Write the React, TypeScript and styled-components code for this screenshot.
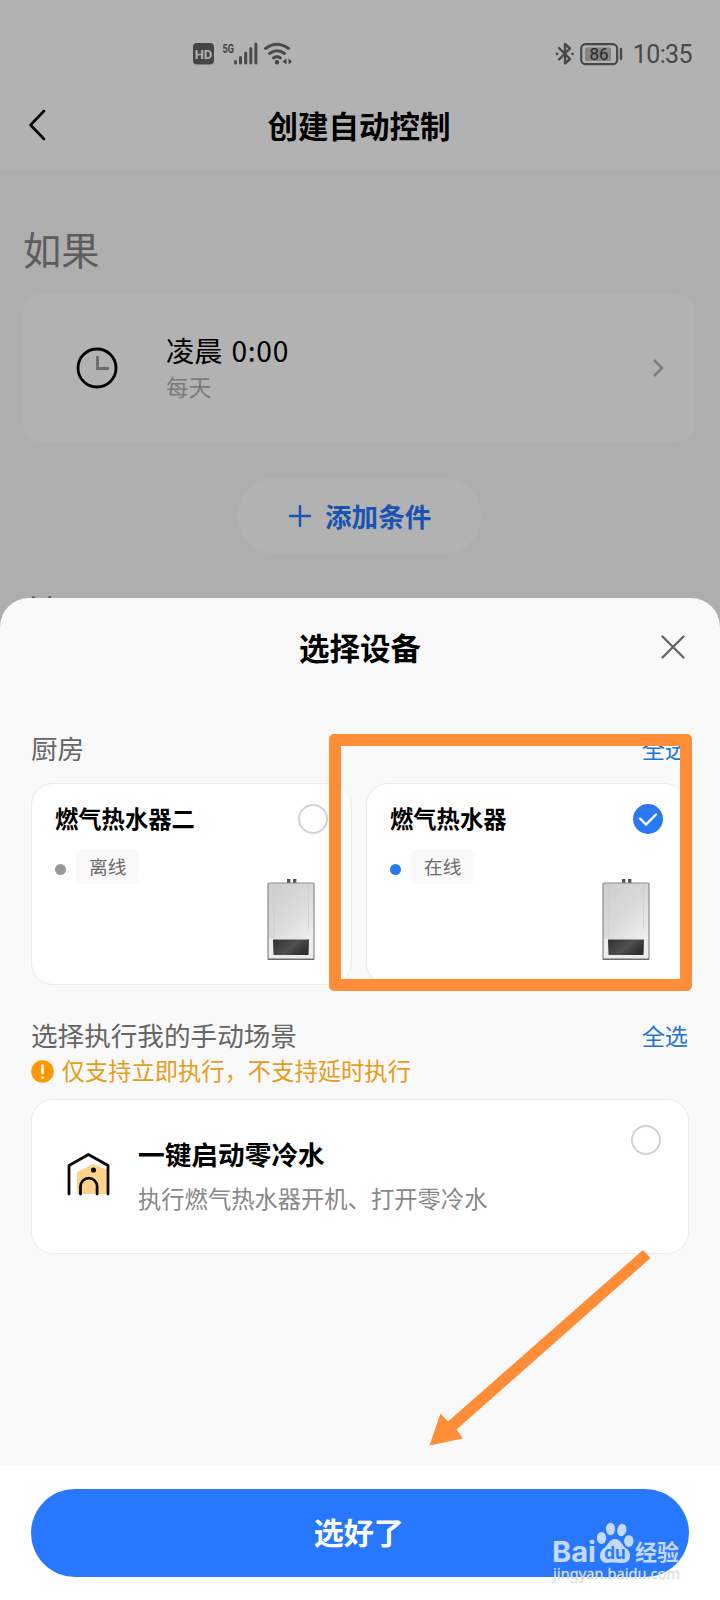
import React from "react";
import styled, { createGlobalStyle } from "styled-components";

const GlobalStyle = createGlobalStyle`
  * { box-sizing: border-box; }
  body { margin: 0; background: #f9f9f9; }
`;

const cjk = `"Noto Sans CJK SC", "Noto Sans", sans-serif`;
const orange = "#ff8d37";
const blue = "#2878ff";

const Screen = styled.div`
  position: relative;
  width: 720px;
  height: 1600px;
  overflow: hidden;
  font-family: ${cjk};
  color: #000;
  white-space: nowrap;
`;

/* page behind the sheet */
const Page = styled.div`
  display: flex;
  flex-direction: column;
  height: 100%;
  background: #fafafa;
`;

const StatusBar = styled.div`
  display: flex;
  align-items: center;
  justify-content: space-between;
  height: 80px;
  padding: 27px 28px 0 193px;
  background: #fff;
  & > div { display: flex; align-items: center; height: 53px; }
`;

const Clock = styled.span`
  margin: 2px 0 0 10px;
  font: 400 25px/28px Roboto, sans-serif;
  letter-spacing: -0.6px;
  color: #686868;
`;

const NavBar = styled.div`
  display: grid;
  grid-template-columns: 80px 1fr 80px;
  align-items: center;
  height: 90px;
  background: #fff;
  padding-bottom: 1px;
  & > svg { margin-left: 28px; }
  & > h1 { margin-left: -2px; }
`;

const Title = styled.h1`
  margin: 0;
  font-size: 30.5px;
  line-height: 44px;
  font-weight: 700;
  text-align: center;
`;

const GroupTitle = styled.h2<{ $top: number }>`
  margin: ${(p) => p.$top}px 0 0 23px;
  font-size: 38.2px;
  line-height: 50px;
  font-weight: 400;
  color: #858585;
`;

const ConditionCard = styled.div`
  display: flex;
  align-items: center;
  height: 150px;
  margin: 19px 25px 0 23px;
  padding: 0 30px 0 53px;
  border-radius: 22px;
  background: #fff;
`;

const ConditionText = styled.div`
  flex: 1;
  margin-left: 48px;
`;

const ConditionName = styled.div`
  font-size: 28.2px;
  line-height: 36px;
`;

const Digits = styled.span`
  margin-left: 2px;
  letter-spacing: 0.7px;
`;

const ConditionNote = styled.div`
  padding-top: 1px;
  font-size: 22.8px;
  line-height: 36px;
  color: #b0b0b0;
`;

const AddButton = styled.div`
  display: flex;
  align-items: center;
  align-self: center;
  gap: 14px;
  width: 244px;
  height: 76px;
  margin: 35px 2px 0 0;
  padding: 0 0 0 52px;
  border-radius: 38px;
  background: #fff;
  color: ${blue};
  font-size: 26.6px;
  line-height: 38px;
  font-weight: 700;
  & > span { margin-top: -1px; }
`;

const Scrim = styled.div`
  position: absolute;
  inset: 0;
  background: rgba(0, 0, 0, 0.3);
`;

/* bottom sheet */
const Sheet = styled.div`
  position: absolute;
  left: 0;
  right: 0;
  bottom: 0;
  height: 1002px;
  display: flex;
  flex-direction: column;
  border-radius: 29px 29px 0 0;
  background: #f9f9f9;
  overflow: hidden;
`;

const SheetHeader = styled.div`
  display: grid;
  grid-template-columns: 80px 1fr 80px;
  align-items: center;
  height: 97px;
  & > svg { margin-left: 20px; }
`;

const SheetBody = styled.div`
  display: flex;
  flex-direction: column;
  padding: 32px 31px 0 31px;
`;

const SectionHead = styled.div<{ $h: number }>`
  display: flex;
  align-items: center;
  justify-content: space-between;
  height: ${(p) => p.$h}px;
`;

const SectionName = styled.span`
  font-size: 26.6px;
  line-height: 36px;
  color: #666;
`;

const SelectAll = styled.span`
  margin-right: 1px;
  font-size: 23.2px;
  line-height: 34px;
  color: #2474d4;
`;

const DeviceRow = styled.div`
  display: grid;
  grid-template-columns: 321px 321px;
  gap: 14px;
  margin: 15px 0 32px;
`;

const Card = styled.div`
  border: 1px solid #ebebeb;
  border-radius: 22px;
  background: #fff;
`;

const DeviceCard = styled(Card)`
  display: flex;
  flex-direction: column;
  height: 202px;
  padding: 19px 23px 0;
`;

const DeviceHead = styled.div`
  display: flex;
  align-items: center;
  justify-content: space-between;
  height: 32px;
  font-size: 23.3px;
  line-height: 30px;
  font-weight: 700;
  & > span:first-child { margin-top: -2px; }
`;

const Radio = styled.span<{ $on?: boolean }>`
  display: flex;
  flex: none;
  align-items: center;
  justify-content: center;
  width: 30px;
  height: 30px;
  border-radius: 50%;
  border: ${(p) => (p.$on ? "none" : "2px solid #d2d2d2")};
  background: ${(p) => (p.$on ? "#2a78f6" : "#fff")};
`;

const DeviceStatus = styled.div`
  display: flex;
  align-items: center;
  gap: 10px;
  height: 36px;
  margin-top: 13px;
`;

const Dot = styled.i<{ $on?: boolean }>`
  width: 11px;
  height: 11px;
  margin-top: 6px;
  border-radius: 50%;
  background: ${(p) => (p.$on ? "#2a78f0" : "#999")};
`;

const Tag = styled.span`
  padding: 0 13px 1px;
  border-radius: 6px;
  background: #f9f9f9;
  font-size: 18.7px;
  line-height: 34px;
  color: #6c6c6c;
`;

const HeaterSlot = styled.div`
  display: flex;
  justify-content: flex-end;
  margin: -5px 13px 0 0;
`;

const Warning = styled.div`
  display: flex;
  align-items: center;
  gap: 8px;
  height: 34px;
  margin: 1px 0 11px -0.5px;
  font-size: 23.3px;
  line-height: 34px;
  color: #e79c1c;
  & > span { margin-top: -2px; }
`;

const SceneCard = styled(Card)`
  display: flex;
  height: 155px;
  padding: 25px 27px 0 34px;
`;

const SceneText = styled.div`
  flex: 1;
  margin: 9px 0 0 28px;
`;

const SceneName = styled.div`
  font-size: 26.7px;
  line-height: 40px;
  font-weight: 700;
`;

const SceneNote = styled.div`
  margin-top: 4px;
  font-size: 23.3px;
  line-height: 40px;
  color: #888;
`;

const IconSlot = styled.div`
  margin-top: 27px;
`;

const Footer = styled.div`
  height: 135px;
  margin-top: auto;
  padding: 23.5px 31px 0 30.5px;
  background: #fff;
`;

const Confirm = styled.div`
  height: 88px;
  padding: 0 2px 3px 0;
  display: flex;
  align-items: center;
  justify-content: center;
  border-radius: 44px;
  background: ${blue};
  color: #fff;
  font-size: 30px;
  font-weight: 700;
`;

/* annotations drawn over the sheet */
const Highlight = styled.div`
  position: absolute;
  left: 329px;
  top: 734px;
  width: 363px;
  height: 257px;
  border: 12px solid ${orange};
  border-radius: 5px;
`;

const Arrow = styled.svg`
  position: absolute;
  left: 425px;
  top: 1245px;
`;

const Watermark = styled.svg`
  position: absolute;
  left: 545px;
  top: 1515px;
`;

const Heater = () => (
  <svg width="48" height="82" viewBox="0 0 48 82">
    <defs>
      <linearGradient id="steel" x1="0" y1="0" x2="0.6" y2="1">
        <stop offset="0" stopColor="#cdcdcd" />
        <stop offset="0.5" stopColor="#d9d9d9" />
        <stop offset="1" stopColor="#f2f2f2" />
      </linearGradient>
      <linearGradient id="glass" x1="0" y1="0" x2="1" y2="0.5">
        <stop offset="0" stopColor="#2e2e2e" />
        <stop offset="0.6" stopColor="#505050" />
        <stop offset="1" stopColor="#303030" />
      </linearGradient>
    </defs>
    <rect x="20" y="0" width="3.4" height="5" fill="#555" />
    <rect x="26" y="0" width="3.4" height="5" fill="#555" />
    <rect x="1" y="4" width="46" height="76.5" rx="1" fill="url(#steel)" stroke="#8c8c8c" strokeWidth="1.2" />
    <path d="M7 6V60M41.5 6V50" stroke="#cacaca" strokeWidth="0.7" />
    <path d="M2 60H46V79H2Z" fill="#ededed" />
    <path d="M1 80.3H47" stroke="#6c6c6c" strokeWidth="1.5" />
    <path d="M6 60.5H42L41.5 76H6.5Z" fill="url(#glass)" />
  </svg>
);

const devices = [
  { name: "燃气热水器二", status: "离线", on: false },
  { name: "燃气热水器", status: "在线", on: true },
];

export default function App() {
  return (
    <Screen>
      <GlobalStyle />
      <Page>
        <StatusBar>
          <div>
            <svg width="102" height="26" viewBox="0 0 102 26" fill="none">
              <rect x="0" y="2" width="21" height="21.5" rx="4" fill="#636363" />
              <text x="10.5" y="18" fontFamily="Roboto, sans-serif" fontSize="13" fontWeight="700" fill="#fff" textAnchor="middle">HD</text>
              <text x="29.5" y="11.5" fontFamily="Roboto, sans-serif" fontSize="12.5" fontWeight="700" fill="#636363" textLength="11.5" lengthAdjust="spacingAndGlyphs">5G</text>
              <path d="M42.5 22V20.5M47.5 22V16.5M52.7 22V12M57.8 22V7.5M62.9 22V3" stroke="#6a6a6a" strokeWidth="3" strokeLinecap="round" />
              <path d="M72.5 7.5Q84 -1 95.5 7.5M76.5 12.5Q84 7 91.5 12.5M80.5 17Q84 14.6 87.5 17" stroke="#6a6a6a" strokeWidth="2.9" strokeLinecap="round" />
              <circle cx="84" cy="21.3" r="2.2" fill="#636363" />
              <path d="M93.5 17.5V23.5L89.5 20.5ZM95.5 17.5V23.5L99 20.5Z" fill="#636363" />
            </svg>
          </div>
          <div>
            <svg width="68" height="26" viewBox="0 0 68 26" fill="none">
              <path d="M4 7L15 18L10 22.5V3L15 7.5L4 18.5" stroke="#686868" strokeWidth="2.4" strokeLinejoin="round" strokeLinecap="round" />
              <circle cx="2" cy="12.8" r="1.4" fill="#686868" />
              <circle cx="17.5" cy="12.8" r="1.4" fill="#686868" />
              <rect x="26.2" y="3.2" width="36" height="20" rx="4.5" stroke="#686868" strokeWidth="2.2" />
              <rect x="30" y="6.5" width="26" height="13.5" rx="2" fill="#bdbdbd" />
              <text x="44" y="19" fontFamily="Roboto, sans-serif" fontSize="17" fill="#3c3c3c" textAnchor="middle">86</text>
              <path d="M66 8V18" stroke="#686868" strokeWidth="2.4" strokeLinecap="round" />
            </svg>
            <Clock>10:35</Clock>
          </div>
        </StatusBar>
        <NavBar>
          <svg width="18" height="32" viewBox="0 0 18 32" fill="none">
            <path d="M16 2L2.5 16L16 30" stroke="#000" strokeWidth="2.6" strokeLinecap="round" strokeLinejoin="round" />
          </svg>
          <Title>创建自动控制</Title>
        </NavBar>
        <GroupTitle $top={54}>如果</GroupTitle>
        <ConditionCard>
          <svg width="42" height="42" viewBox="0 0 42 42" fill="none">
            <circle cx="21" cy="21" r="19" stroke="#000" strokeWidth="2.8" />
            <path d="M21.5 9V21.5H33" stroke="#999" strokeWidth="2.8" />
          </svg>
          <ConditionText>
            <ConditionName>凌晨<Digits> 0:00</Digits></ConditionName>
            <ConditionNote>每天</ConditionNote>
          </ConditionText>
          <svg width="13" height="20" viewBox="0 0 13 20" fill="none">
            <path d="M2 2L10 10L2 18" stroke="#b4b4b4" strokeWidth="2.5" />
          </svg>
        </ConditionCard>
        <AddButton>
          <svg width="22" height="22" viewBox="0 0 22 22">
            <path d="M11 1V21M1 11H21" stroke={blue} strokeWidth="2.5" strokeLinecap="round" />
          </svg>
          <span>添加条件</span>
        </AddButton>
        <GroupTitle $top={34}>就</GroupTitle>
      </Page>
      <Scrim />
      <Sheet>
        <SheetHeader>
          <span />
          <Title as="h2">选择设备</Title>
          <svg width="26" height="26" viewBox="0 0 26 26">
            <path d="M2.5 2.5L23.5 23.5M23.5 2.5L2.5 23.5" stroke="#666" strokeWidth="2.4" strokeLinecap="round" />
          </svg>
        </SheetHeader>
        <SheetBody>
          <SectionHead $h={41}>
            <SectionName>厨房</SectionName>
            <SelectAll>全选</SelectAll>
          </SectionHead>
          <DeviceRow>
            {devices.map((d) => (
              <DeviceCard key={d.name}>
                <DeviceHead>
                  <span>{d.name}</span>
                  <Radio $on={d.on}>
                    {d.on && (
                      <svg width="20" height="16" viewBox="0 0 20 16" fill="none">
                        <path d="M2 7.5L8 13.5L18 3.5" stroke="#fff" strokeWidth="2.3" strokeLinecap="round" />
                      </svg>
                    )}
                  </Radio>
                </DeviceHead>
                <DeviceStatus>
                  <Dot $on={d.on} />
                  <Tag>{d.status}</Tag>
                </DeviceStatus>
                <HeaterSlot>
                  <Heater />
                </HeaterSlot>
              </DeviceCard>
            ))}
          </DeviceRow>
          <SectionHead $h={36}>
            <SectionName>选择执行我的手动场景</SectionName>
            <SelectAll>全选</SelectAll>
          </SectionHead>
          <Warning>
            <svg width="23" height="23" viewBox="0 0 23 23">
              <circle cx="11.5" cy="11.5" r="11.3" fill="#ff9800" />
              <path d="M11.5 5.5V13" stroke="#fff" strokeWidth="2.6" strokeLinecap="round" />
              <circle cx="11.5" cy="17.5" r="1.6" fill="#fff" />
            </svg>
            <span>仅支持立即执行，不支持延时执行</span>
          </Warning>
          <SceneCard>
            <IconSlot>
              <svg width="44" height="44" viewBox="0 0 44 44" fill="none">
                <path d="M11 20L27 12L42 18V42H11Z" fill="#ffd28c" />
                <path d="M3 42V13.5L22.5 2.5L42 13.5V42" stroke="#0a0a0a" strokeWidth="2.8" strokeLinejoin="round" strokeLinecap="round" />
                <path d="M14.5 42V34.5A8.3 8.3 0 0 1 31.1 34.5V42" stroke="#0a0a0a" strokeWidth="2.8" strokeLinecap="round" />
                <circle cx="27.5" cy="18" r="2.6" fill="#0a0a0a" />
              </svg>
            </IconSlot>
            <SceneText>
              <SceneName>一键启动零冷水</SceneName>
              <SceneNote>执行燃气热水器开机、打开零冷水</SceneNote>
            </SceneText>
            <Radio />
          </SceneCard>
        </SheetBody>
        <Footer>
          <Confirm>选好了</Confirm>
        </Footer>
      </Sheet>
      <Highlight />
      <Arrow width="230" height="205" viewBox="425 1245 230 205">
        <path d="M643 1250L650.5 1258L456.5 1429.5L463 1438.5L429.5 1445.5L440.5 1413.5L448 1421.5Z" fill={orange} />
      </Arrow>
      <Watermark width="150" height="75" viewBox="545 1515 150 75">
        <g fill="#c5d9ff">
          <text x="552" y="1561.5" fontFamily="Inter, sans-serif" fontSize="28" fontWeight="700" textLength="44" lengthAdjust="spacingAndGlyphs">Bai</text>
          <ellipse cx="601.5" cy="1538" rx="4.7" ry="6" />
          <ellipse cx="610.5" cy="1529" rx="4.5" ry="6.2" />
          <ellipse cx="621.8" cy="1530" rx="4.5" ry="6.2" transform="rotate(12 621.8 1530)" />
          <ellipse cx="628.8" cy="1541" rx="4.7" ry="6" />
          <path d="M615 1539C621 1539 622 1546 627 1549C632 1553 631 1563 623 1563C618 1563 612 1562 607 1563C599 1563 598 1553 603 1549C608 1546 609 1539 615 1539Z" />
          <text x="635" y="1559.5" fontFamily="Noto Sans CJK SC, sans-serif" fontSize="22" fontWeight="700" textLength="44">经验</text>
        </g>
        <text x="615" y="1559" fontFamily="Inter, sans-serif" fontSize="17" fontWeight="700" fill={blue} textAnchor="middle">du</text>
        <text x="553" y="1579" fontFamily="Noto Sans, sans-serif" fontSize="14.5" fill="#e4edff" stroke="#c8c8c8" strokeWidth="0.3" textLength="127">jingyan.baidu.com</text>
      </Watermark>
    </Screen>
  );
}
